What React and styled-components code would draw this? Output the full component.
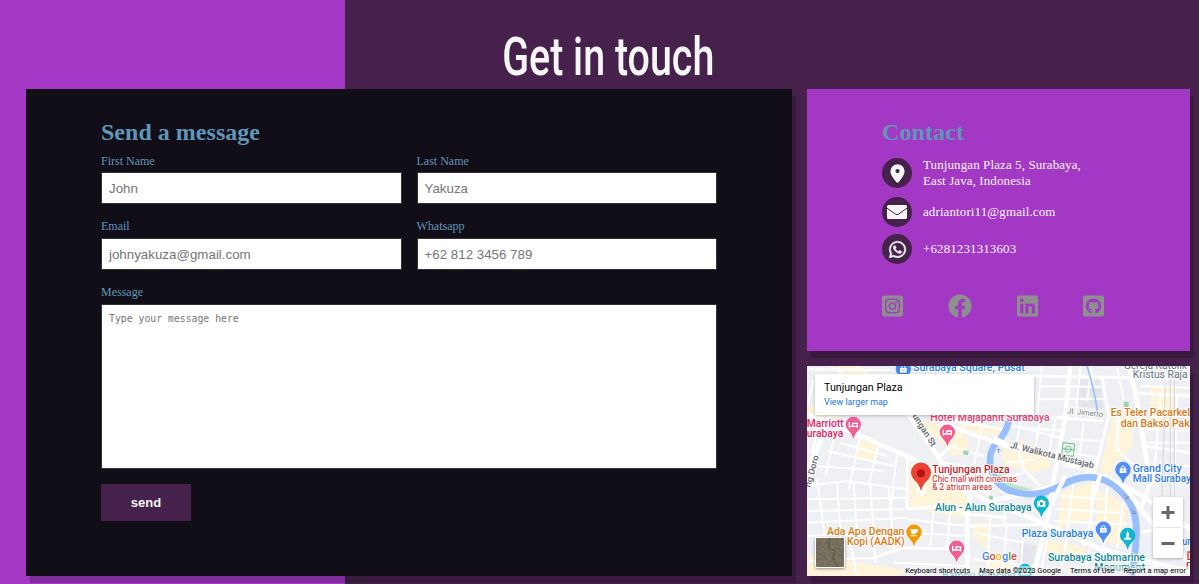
import React from "react";
import styled, { createGlobalStyle } from "styled-components";
import { FaWhatsapp, FaInstagramSquare, FaFacebook, FaLinkedin, FaGithubSquare } from "react-icons/fa";

const GlobalStyle = createGlobalStyle`
  * { box-sizing: border-box; }
  body { margin: 0; background: #45214c; overflow: hidden; }
`;

const Page = styled.main`
  height: 584px;
  overflow: hidden;
  padding: 0 9px 0 26px;
  background: linear-gradient(to right, #a238c4 345px, #45214c 345px);
  font-family: "Liberation Serif", "Times New Roman", serif;
`;

const TitleRow = styled.header`
  height: 89px;
  display: flex;
  justify-content: center;
  padding-top: 25px;
`;

const Title = styled.h1`
  margin: 0;
  font: 500 54px/64px Roboto, sans-serif;
  color: #f5f5f5;
  white-space: nowrap;
  transform: scaleX(0.73);
`;

const Layout = styled.div`
  display: grid;
  grid-template-columns: 766px 383px;
  grid-template-rows: 262px 210px;
  gap: 15px;
`;

const Panel = styled.section`
  background: ${(p) => p.$bg};
  grid-row: ${(p) => p.$rows || "auto"};
  padding: ${(p) => p.$pad || "0"};
  box-shadow: 4px 7px 0 rgba(0, 0, 0, 0.2);
  min-width: 0;
`;

const Heading = styled.h2`
  margin: 0;
  font-size: 24px;
  line-height: 27px;
  letter-spacing: ${(p) => p.$spacing};
  color: #6096b8;
`;

const FieldGrid = styled.form`
  display: grid;
  grid-template-columns: 1fr 1fr;
  column-gap: 15px;
`;

const Field = styled.label`
  display: flex;
  flex-direction: column;
  grid-column: ${(p) => (p.$wide ? "1 / -1" : "auto")};
  height: ${(p) => p.$height};
  font-size: 12px;
  line-height: 14px;
  color: #6096b8;
`;

const FieldName = styled.span`
  height: ${(p) => (p.$first ? "26px" : "22px")};
  padding-top: ${(p) => (p.$first ? "8px" : "3px")};
`;

const Input = styled.input`
  height: 32px;
  width: 100%;
  padding: 0 7px;
  border: 1px solid #333;
  background: #fff;
  font: 13.33px "Liberation Sans", Arial, sans-serif;
  &::placeholder { color: #757575; }
`;

const TextArea = styled.textarea`
  height: 165px;
  width: 100%;
  padding: 7px;
  border: 1px solid #333;
  background: #fff;
  resize: none;
  font: 9.8px/13px "DejaVu Sans Mono", monospace;
  &::placeholder { color: #757575; }
`;

const SendButton = styled.button`
  width: 90px;
  height: 37px;
  border: 0;
  background: #45214c;
  color: #f5f5f5;
  font: bold 13px "Liberation Sans", Arial, sans-serif;
`;

const ContactList = styled.ul`
  list-style: none;
  margin: 8px 0 0;
  padding: 0;
  display: flex;
  flex-direction: column;
`;

const ContactItem = styled.li`
  display: flex;
  align-items: center;
  gap: 11px;
  height: ${(p) => p.$height};
  color: #f5f5f5;
  font-size: 13px;
  line-height: 16px;
  letter-spacing: 0.1px;
  white-space: pre-line;
`;

const IconDisc = styled.span`
  display: flex;
  align-items: center;
  justify-content: center;
  width: 30px;
  height: 30px;
  border-radius: 50%;
  background: #45214c;
  font-size: 19px;
`;

const Socials = styled.div`
  display: flex;
  align-items: center;
  justify-content: space-between;
  width: 222px;
  margin-top: 28px;
  color: #8f8f8f;
  svg { height: 24px; width: 21px; display: block; }
  svg:nth-child(2) { width: 24px; }
`;

const MapFrame = styled(Panel)`
  position: relative;
  overflow: hidden;
  font-family: Roboto, sans-serif;
`;

const MapDrawing = styled.svg`
  display: block;
  width: 383px;
  height: 210px;
`;

const PlaceCard = styled.div`
  position: absolute;
  left: 8px;
  top: 8px;
  width: 219px;
  height: 41px;
  padding: 6px 9px;
  background: #fff;
  box-shadow: 0 1px 3px rgba(0, 0, 0, 0.25);
`;

const PlaceName = styled.div`
  font-size: 10.7px;
  line-height: 15px;
  color: #000;
`;

const PlaceLink = styled.div`
  font-size: 8.9px;
  line-height: 14px;
  color: #1a73e8;
`;

const ZoomBox = styled.div`
  position: absolute;
  right: 7px;
  top: 131px;
  width: 30px;
  height: 61px;
  background: #fff;
  border-radius: 2px;
  box-shadow: 0 1px 3px rgba(0, 0, 0, 0.3);
  svg { display: block; }
`;

const Thumb = styled.div`
  position: absolute;
  left: 8px;
  top: 171px;
  width: 30px;
  height: 31px;
  border: 1px solid #fff;
  border-radius: 2px;
  overflow: hidden;
  box-shadow: 0 1px 3px rgba(0, 0, 0, 0.4);
  svg { display: block; }
`;

const Credits = styled.div`
  position: absolute;
  right: 0;
  bottom: 0;
  display: flex;
  gap: 9px;
  height: 10px;
  padding: 0 4px 0 2px;
  background: rgba(245, 245, 245, 0.55);
  font-size: 7.5px;
  line-height: 10px;
  color: #000;
  white-space: nowrap;
`;

const arteries = [
  "M-10 145 L60 165 L150 205 L310 275 L400 320 L540 405 L720 475 L870 545 L1010 585 L1150 615",
  "M300 140 L350 210 L400 280 L430 340 L490 390 L480 440 L482 630",
  "M0 320 L45 215 L70 150",
  "M790 -5 L775 150 L740 340 L725 440 L680 630",
  "M965 -5 L985 80 L1012 240 L1030 350 L1000 430",
  "M540 405 L640 388 L760 355 L840 325 L890 330 L960 375 L1010 440 L1070 510 L1149 590",
  "M890 330 L1000 385 L1149 490",
  "M400 170 L500 205 L600 240 L720 270 L860 315",
];

const avenues = [
  "M680 30 L1149 38", "M885 30 L905 150 L880 250 L860 330", "M680 150 L890 165",
  "M570 220 L540 270 L550 340 L590 380", "M630 240 L650 310 L700 360",
  "M860 345 L850 470 L830 540", "M300 430 L400 420 L490 445 L600 455",
  "M302 275 L300 430", "M200 575 L290 545 L480 550", "M390 280 L430 240",
  "M1012 240 L1149 260", "M985 80 L1149 90", "M980 300 L930 250 L935 130",
  "M485 480 L720 475", "M980 500 L1149 480",
];

const lanes = [
  "M40 160 L15 260 M90 180 L55 330 M160 210 L125 370 M215 235 L185 360 M270 260 L250 440",
  "M0 360 L120 345 L300 370 M0 400 L300 395 M0 435 L290 430 M0 470 L300 455 M0 510 L300 500",
  "M30 340 L55 520 M90 350 L105 560 M140 350 L150 500 M190 350 L205 590 M245 360 L260 550",
  "M30 300 L230 315 M60 255 L260 300 M100 230 L240 270 M0 585 L210 575 M130 540 L150 630",
  "M300 460 L480 480 M300 500 L480 510 M380 430 L370 540 M430 430 L420 545 M260 590 L480 600",
  "M700 60 L885 62 M690 100 L900 98 M820 0 L805 160 M850 30 L840 105 M705 0 L690 150",
  "M620 180 L760 215 M650 120 L630 225 M700 160 L685 245 M745 160 L725 265 M590 180 L775 195",
  "M790 220 L890 225 M785 260 L880 275 M770 300 L855 310 M830 170 L815 290",
  "M440 165 L590 190 M480 150 L460 210 M530 160 L500 300 M430 240 L530 270 M410 290 L540 310 L550 370",
  "M600 290 L690 280 M590 335 L650 320 M500 330 L550 365 M440 340 L560 390 M600 420 L590 470",
  "M1030 150 L1140 150 M1020 190 L1149 195 M1020 230 L1149 230 M1060 90 L1040 350 M1110 90 L1100 430",
  "M1000 60 L1149 65 M930 0 L950 100 M850 0 L860 60 M1030 300 L1149 300 M1030 340 L1149 345",
  "M760 390 L900 400 M750 430 L940 440 M740 465 L960 475 M800 350 L780 500 M900 365 L890 540 M950 400 L930 550",
  "M500 500 L650 530 M550 455 L540 630 M600 470 L590 600 M650 475 L640 630 M500 580 L680 600",
  "M720 520 L700 630 M780 515 L760 630 M850 550 L830 630 M980 580 L970 630 M1050 530 L1040 630",
  "M0 10 L250 12 M70 0 L110 25 M150 0 L180 22 M0 130 L20 40",
];

const blocks = [
  "M155 205 L220 235 L200 290 L150 280 Z", "M310 285 L400 325 L490 395 L475 455 L310 425 Z",
  "M320 165 L400 170 L480 210 L485 260 L440 270 L400 225 Z", "M455 160 L590 185 L580 210 L455 195 Z",
  "M590 240 L720 275 L735 305 L680 320 L590 295 Z", "M920 145 L980 145 L975 240 L900 330 L880 310 Z",
  "M765 380 L860 345 L850 460 L750 490 Z", "M870 375 L920 390 L960 430 L945 540 L865 520 Z",
  "M0 115 L100 145 L95 160 L0 145 Z", "M1030 60 L1110 65 L1095 165 L1030 160 Z",
  "M500 465 L545 470 L540 550 L495 510 Z", "M90 0 L160 0 L190 25 L90 25 Z",
  "M550 570 L620 580 L600 630 L540 630 Z", "M640 225 L740 265 L700 275 L630 250 Z",
  "M0 565 L180 595 L290 610 L280 630 L0 630 Z", "M720 520 L840 545 L830 575 L710 555 Z",
];

const halo = { stroke: "#fff", strokeWidth: 5, strokeLinejoin: "round", paintOrder: "stroke" };

function MapLabel({ x, y, width, color, size = 30, rotate = 0, weight = 500, children }) {
  return (
    <text
      x={x} y={y} fill={color} fontSize={size} fontWeight={weight} textLength={width}
      lengthAdjust="spacingAndGlyphs" transform={`rotate(${rotate} ${x} ${y})`} {...halo}
    >
      {children}
    </text>
  );
}

const pinGlyphs = {
  bed: <path d="M-12 -8 V9 M-12 5 H12 M12 9 V-4 H-2 V4" stroke="#fff" strokeWidth="4" fill="none" />,
  bag: (
    <>
      <path d="M-10 -4 H10 V10 H-10 Z" fill="#fff" />
      <path d="M-5 -4 V-8 Q0 -15 5 -8 V-4" stroke="#fff" strokeWidth="3" fill="none" />
      <path d="M-4 1 Q0 7 4 1" stroke="#4285f4" strokeWidth="2" fill="none" />
    </>
  ),
  cup: <path d="M-11 -9 H12 V0 H7 Q6 6 0 6 H-4 Q-9 4 -9 -1 Z M-11 9 H9 V12 H-11 Z" fill="#fff" />,
  camera: (
    <>
      <path d="M-12 -7 H-6 L-4 -11 H4 L6 -7 H12 V10 H-12 Z" fill="#fff" />
      <circle cy="1" r="5" fill="#12a4b8" />
    </>
  ),
  tower: <path d="M0 -15 L4 -5 L4 5 L10 8 V12 H-10 V8 L-4 5 L-4 -5 Z" fill="#fff" />,
};

function Pin({ x, y, color, glyph }) {
  return (
    <g transform={`translate(${x} ${y})`}>
      <path d="M0 42 Q-4 27 -15 17 A23 23 0 1 1 15 17 Q4 27 0 42 Z" fill={color} />
      {pinGlyphs[glyph]}
    </g>
  );
}

function CityMap() {
  return (
    <MapDrawing viewBox="0 0 1149 630" fontFamily="Roboto, sans-serif">
      <rect width="1149" height="630" fill="#eff0f3" />
      <path d="M810 40 H880 L890 130 L805 120 Z M640 530 L690 540 L670 620 L630 620 Z" fill="#e3e5ea" />
      {blocks.map((d) => <path key={d} d={d} fill="#fdf4d9" />)}
      {lanes.map((d) => <path key={d} d={d} fill="none" stroke="#fff" strokeWidth="6" />)}
      {avenues.map((d) => <path key={d} d={d} fill="none" stroke="#fff" strokeWidth="9" />)}
      <path d="M1090 0 V400 M1102 0 V430 M1075 60 L1065 390" stroke="#d9dbdf" strokeWidth="4" fill="none" />
      <path d="M555 275 Q555 310 620 355 L690 375 L610 372 Q555 330 555 275" fill="#bfe3c8" />
      <path
        d="M605 165 Q600 200 565 235 Q535 275 560 330 C590 390 690 400 760 360 S890 325 940 375 S1000 470 975 630"
        fill="none" stroke="#98bffc" strokeWidth="20"
      />
      <path d="M840 0 Q860 60 872 140" stroke="#98bffc" strokeWidth="5" fill="none" />
      {arteries.map((d) => (
        <path key={d} d={d} fill="none" stroke="#fff" strokeWidth="14" strokeLinejoin="round" />
      ))}
      <path
        d="M560 335 C590 392 690 398 760 358 S890 325 940 375 S1000 470 980 570"
        fill="none" stroke="#98bffc" strokeWidth="17"
      />
      <path d="M775 330 L730 420 M880 325 L860 390 M560 215 L600 235" stroke="#fff" strokeWidth="13" fill="none" />
      <path d="M470 252 L486 255 L482 268 L468 264 Z M548 388 L559 389 L556 402 L545 400 Z M950 107 H965 V123 H950 Z" fill="#9bd3ac" />
      <g fill="none" stroke="#6fc087" strokeWidth="3">
        <path d="M768 230 L803 234 L799 271 L764 267 Z M766 248 L801 252" />
        <circle cx="784" cy="250" r="9" />
      </g>
      <path d="M575 262 V248 L570 254 M575 248 L581 254 M950 385 L963 398 M963 390 V398 H955 M972 430 L984 443 M984 435 V443 H976" stroke="#818999" strokeWidth="2.5" fill="none" />

      <MapLabel x={318} y={16} width={335} color="#287ee8">Surabaya Square, Pusat</MapLabel>
      <MapLabel x={950} y={8} width={190} color="#60727f" weight={400}>Gereja Katolik</MapLabel>
      <MapLabel x={977} y={35} width={165} color="#60727f" weight={400}>Kristus Raja</MapLabel>
      <MapLabel x={370} y={166} width={358} color="#e83e78">Hotel Majapahit Surabaya</MapLabel>
      <MapLabel x={-1} y={182} width={111} color="#e51e63">Marriott</MapLabel>
      <MapLabel x={-1} y={213} width={110} color="#e51e63">urabaya</MapLabel>
      <MapLabel x={316} y={150} width={110} color="#5e646b" size={26} rotate={58}>ungan St</MapLabel>
      <MapLabel x={10} y={365} width={98} color="#5e646b" size={26} rotate={-75}>ng Doro</MapLabel>
      <MapLabel x={780} y={142} width={108} color="#747980" size={23} rotate={6} weight={400}>Jl. Jimerto</MapLabel>
      <MapLabel x={608} y={245} width={258} color="#5e646b" size={27} rotate={14}>Jl. Walikota Mustajab</MapLabel>
      <MapLabel x={911} y={151} width={246} color="#d77917">Es Teler Pacarkeli</MapLabel>
      <MapLabel x={941} y={183} width={207} color="#d77917">dan Bakso Pak</MapLabel>
      <MapLabel x={977} y={318} width={147} color="#327be3">Grand City</MapLabel>
      <MapLabel x={977} y={348} width={175} color="#327be3">Mall Surabay</MapLabel>
      <MapLabel x={376} y={322} width={232} color="#c5221f">Tunjungan Plaza</MapLabel>
      <MapLabel x={376} y={347} width={254} color="#c5221f" size={25} weight={400}>Chic mall with cinemas</MapLabel>
      <MapLabel x={376} y={371} width={180} color="#c5221f" size={25} weight={400}>&amp; 2 atrium areas</MapLabel>
      <MapLabel x={384} y={434} width={290} color="#0b8792">Alun - Alun Surabaya</MapLabel>
      <MapLabel x={60} y={506} width={232} color="#dc7b11">Ada Apa Dengan</MapLabel>
      <MapLabel x={120} y={537} width={173} color="#dc7b11">Kopi (AADK)</MapLabel>
      <MapLabel x={644} y={513} width={215} color="#287ee8">Plaza Surabaya</MapLabel>
      <MapLabel x={723} y={585} width={291} color="#0b8792">Surabaya Submarine</MapLabel>
      <MapLabel x={862} y={614} width={152} color="#0b8792">Monument</MapLabel>
      <MapLabel x={406} y={638} width={220} color="#0b8792">Bambu Runcing</MapLabel>
      <MapLabel x={1126} y={537} width={30} color="#287ee8">un</MapLabel>
      <path d="M1149 558 H1143 V580 H1149 M1149 590 H1141 V610" fill="none" stroke="#e53935" strokeWidth="4" />

      <Pin x={289} y={10} color="#4285f4" glyph="bag" />
      <Pin x={139} y={176} color="#f15e93" glyph="bed" />
      <Pin x={421} y={199} color="#f15e93" glyph="bed" />
      <Pin x={449} y={547} color="#f15e93" glyph="bed" />
      <Pin x={948} y={311} color="#4f8ef7" glyph="bag" />
      <Pin x={889} y={490} color="#4f8ef7" glyph="bag" />
      <Pin x={703} y={412} color="#12b5cb" glyph="camera" />
      <Pin x={962} y={509} color="#12b5cb" glyph="tower" />
      <Pin x={654} y={617} color="#12b5cb" glyph="camera" />
      <Pin x={321} y={499} color="#f29900" glyph="cup" />

      <circle cx="342" cy="374" r="15" fill="#fff" />
      <path d="M342 376 Q337 353 321 341 A30 30 0 1 1 363 341 Q347 353 342 376 Z" fill="#ea4335" />
      <circle cx="342" cy="322" r="12" fill="#b31412" />

      <text x="525" y="583" fontSize="35" textLength="105" lengthAdjust="spacingAndGlyphs" fontWeight="500" {...halo}>
        <tspan fill="#4285f4">G</tspan><tspan fill="#ea4335">o</tspan><tspan fill="#fbbc04">o</tspan><tspan fill="#4285f4">g</tspan><tspan fill="#34a853">l</tspan><tspan fill="#ea4335">e</tspan>
      </text>
    </MapDrawing>
  );
}

function SatelliteTexture() {
  return (
    <svg width="28" height="29">
      <filter id="terrain" x="0" y="0" width="100%" height="100%">
        <feTurbulence type="fractalNoise" baseFrequency="0.4" numOctaves="3" seed="4" />
        <feColorMatrix values="0.5 0.2 0 0 0.06  0.4 0.25 0 0 0.06  0.3 0.2 0 0 0.08  0 0 0 0 1" colorInterpolationFilters="sRGB" />
      </filter>
      <g style={{ colorInterpolationFilters: "sRGB" }}>
        <rect width="28" height="29" filter="url(#terrain)" />
      </g>
      <rect width="28" height="29" fill="#5c5547" opacity="0.5" />
      <path d="M14 0 L12 9 L19 13 L17 20 L22 29" fill="none" stroke="#46564a" strokeWidth="1.2" opacity="0.7" />
    </svg>
  );
}

function LocationIcon() {
  return (
    <svg width="15" height="19" viewBox="0 0 15 19">
      <path
        fillRule="evenodd" fill="#f5f5f5"
        d="M7.5 0.3 A7.1 7 0 0 1 14.6 7.2 C14.6 10.8 10.6 16 8.2 18.5 Q7.5 19.1 6.8 18.5 C4.4 16 0.4 10.8 0.4 7.2 A7.1 7 0 0 1 7.5 0.3 Z M7.5 5 A2.1 2.1 0 1 0 7.5 9.2 A2.1 2.1 0 1 0 7.5 5 Z"
      />
    </svg>
  );
}

function MailIcon() {
  return (
    <svg width="20" height="14" viewBox="0 0 20 14">
      <rect width="20" height="14" rx="1.6" fill="#f5f5f5" />
      <path d="M0 3.2 L8.8 9.3 Q10 10.1 11.2 9.3 L20 3.2" fill="none" stroke="#45214c" strokeWidth="1" />
    </svg>
  );
}

function WhatsappIcon() {
  return <FaWhatsapp stroke="#f5f5f5" strokeWidth="14" />;
}

const contacts = [
  { icon: LocationIcon, height: "38px", text: "Tunjungan Plaza 5, Surabaya,\nEast Java, Indonesia" },
  { icon: MailIcon, height: "40px", text: "adriantori11@gmail.com" },
  { icon: WhatsappIcon, height: "34px", text: "+6281231313603" },
];

export default function App() {
  return (
    <Page>
      <GlobalStyle />
      <TitleRow><Title>Get in touch</Title></TitleRow>
      <Layout>
        <Panel $bg="#110e18" $rows="1 / 3" $pad="30px 75px 0">
          <Heading $spacing="0.02px">Send a message</Heading>
          <FieldGrid>
            <Field $height="70px"><FieldName $first>First Name</FieldName><Input placeholder="John" /></Field>
            <Field $height="70px"><FieldName $first>Last Name</FieldName><Input placeholder="Yakuza" /></Field>
            <Field $height="66px"><FieldName>Email</FieldName><Input placeholder="johnyakuza@gmail.com" /></Field>
            <Field $height="66px"><FieldName>Whatsapp</FieldName><Input placeholder="+62 812 3456 789" /></Field>
            <Field $wide $height="202px"><FieldName>Message</FieldName><TextArea placeholder="Type your message here" /></Field>
            <SendButton type="button">send</SendButton>
          </FieldGrid>
        </Panel>
        <Panel $bg="#a238c4" $pad="30px 75px 0">
          <Heading $spacing="0.1px">Contact</Heading>
          <ContactList>
            {contacts.map(({ icon: Icon, height, text }) => (
              <ContactItem key={text} $height={height}>
                <IconDisc><Icon /></IconDisc>
                <span>{text}</span>
              </ContactItem>
            ))}
          </ContactList>
          <Socials>
            <FaInstagramSquare /><FaFacebook /><FaLinkedin /><FaGithubSquare />
          </Socials>
        </Panel>
        <MapFrame $bg="#eff0f3">
          <CityMap />
          <PlaceCard>
            <PlaceName>Tunjungan Plaza</PlaceName>
            <PlaceLink>View larger map</PlaceLink>
          </PlaceCard>
          <ZoomBox>
            <svg width="30" height="61" stroke="#666" strokeWidth="3" fill="none">
              <path d="M8.5 15.5 H21.5 M15 9 V22 M8.5 46.5 H21.5" />
              <path d="M2 30.5 H28" stroke="#e6e6e6" strokeWidth="1" />
            </svg>
          </ZoomBox>
          <Thumb><SatelliteTexture /></Thumb>
          <Credits>
            <span>Keyboard shortcuts</span><span>Map data ©2023 Google</span>
            <span>Terms of Use</span><span>Report a map error</span>
          </Credits>
        </MapFrame>
      </Layout>
    </Page>
  );
}
